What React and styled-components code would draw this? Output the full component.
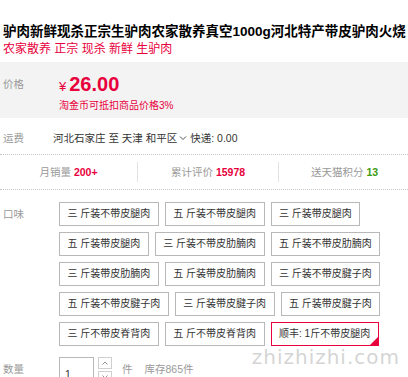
import React from "react";
import styled, { createGlobalStyle } from "styled-components";

const Global = createGlobalStyle`
  html, body { margin: 0; padding: 0; background: #fff; }
  body {
    width: 408px; height: 377px; overflow: hidden;
    font-family: "Liberation Sans", "Noto Sans CJK SC", sans-serif;
    color: #333;
  }
`;

const RED = "#e8003c";

const Page = styled.div`
  position: relative;
  width: 408px;
  height: 377px;
  overflow: hidden;
`;

const Title = styled.h1`
  margin: 0;
  padding: 23px 0 0 3px;
  font-size: 13.5px;
  line-height: 18px;
  font-weight: bold;
  color: #000;
  white-space: nowrap;
`;

const SubTitle = styled.p`
  margin: 0;
  padding-left: 3px;
  font-size: 12px;
  line-height: 16px;
  color: ${RED};
  white-space: nowrap;
`;

const PricePanel = styled.div`
  margin-top: 5px;
  background: #f3f3f3;
  padding: 11px 0 4px;
  display: grid;
  grid-template-columns: 59px 1fr;
`;

const Label = styled.div`
  padding-left: 3px;
  font-size: 10.5px;
  line-height: ${(p) => p.$lh || "16px"};
  color: #999;
`;

const PriceCol = styled.div`
  display: flex;
  flex-direction: column;
`;

const Price = styled.div`
  display: flex;
  align-items: baseline;
  color: ${RED};
  line-height: 22px;
`;

const Yen = styled.span`
  font-size: 13px;
  margin-right: 3px;
`;

const Amount = styled.span`
  font-size: 20px;
  font-weight: bold;
  font-family: "Liberation Sans", Arial, sans-serif;
`;

const Promo = styled.div`
  font-size: 10px;
  line-height: 16px;
  color: ${RED};
`;

const Row = styled.div`
  box-sizing: border-box;
  display: grid;
  grid-template-columns: ${(p) => p.$col || "53px"} 1fr;
  align-items: center;
  height: ${(p) => p.$h || "auto"};
  padding-top: 3px;
`;

const Freight = styled.div`
  font-size: 10.5px;
  color: #333;
  white-space: nowrap;
  display: flex;
  align-items: center;
`;

const Chevron = styled.svg`
  width: 8px;
  height: 6px;
  margin: 0 3px 0 2px;
`;

const Dotted = styled.div`
  border-top: 1px dotted #c8c8c8;
`;

const Stats = styled.div`
  display: grid;
  grid-template-columns: 137px 141px 1fr;
  height: 34px;
  align-items: center;
`;

const Stat = styled.div`
  text-align: center;
  font-size: 10.5px;
  color: #999;
  border-left: ${(p) => (p.$first ? "none" : "1px solid #e3e3e3")};
  line-height: 20px;
  padding-left: ${(p) => p.$pl || "0"};
`;

const Num = styled.b`
  color: ${(p) => p.$color || RED};
  font-weight: bold;
  margin-left: 3px;
`;

const SkuSection = styled.div`
  display: grid;
  grid-template-columns: 59px 336px;
  padding-top: 12px;
`;

const SkuList = styled.div`
  display: flex;
  flex-wrap: wrap;
  gap: 6px 6px;
`;

const Sku = styled.div`
  position: relative;
  box-sizing: border-box;
  height: 24px;
  padding: 0 7.5px;
  border: 1px solid ${(p) => (p.$selected ? "#e8003c" : "#b8b8b8")};
  font-size: 10px;
  line-height: 22px;
  color: #333;
  white-space: nowrap;
  background: #fff;
`;

const Corner = styled.span`
  position: absolute;
  right: -1px;
  bottom: -1px;
  width: 0;
  height: 0;
  border-style: solid;
  border-width: 0 0 10px 10px;
  border-color: transparent transparent ${RED} transparent;
`;

const QtyRow = styled.div`
  display: grid;
  grid-template-columns: 59px auto;
  margin-top: 11px;
  align-items: start;
`;

const QtyControls = styled.div`
  display: flex;
  align-items: flex-start;
`;

const QtyInput = styled.div`
  box-sizing: border-box;
  width: 35px;
  height: 30px;
  border: 1px solid #b8b8b8;
  font-size: 10.5px;
  padding: 10px 0 0 5px;
  color: #333;
`;

const Steps = styled.div`
  display: flex;
  flex-direction: column;
  gap: 2px;
  margin-left: 4px;
`;

const Step = styled.div`
  box-sizing: border-box;
  width: 14px;
  height: 12px;
  border: 1px solid #cfcfcf;
  display: flex;
  align-items: center;
  justify-content: center;
`;

const Unit = styled.span`
  font-size: 10.5px;
  color: #999;
  line-height: 24px;
  margin-left: ${(p) => p.$ml || "0"};
`;

const Watermark = styled.div`
  position: absolute;
  right: 8px;
  bottom: 8px;
  font-family: "DejaVu Sans", sans-serif;
  font-size: 20px;
  letter-spacing: 1px;
  color: rgba(205, 205, 205, 0.85);
  text-shadow: 0 0 2px #fff, 1px 1px 0 #fff;
  pointer-events: none;
`;

const skus = [
  "三 斤装不带皮腿肉",
  "五 斤装不带皮腿肉",
  "三 斤装带皮腿肉",
  "五 斤装带皮腿肉",
  "三 斤装不带皮肋腩肉",
  "五 斤装不带皮肋腩肉",
  "三 斤装带皮肋腩肉",
  "五 斤装带皮肋腩肉",
  "三 斤装不带皮腱子肉",
  "五 斤装不带皮腱子肉",
  "三 斤装带皮腱子肉",
  "五 斤装带皮腱子肉",
  "三 斤不带皮脊背肉",
  "五 斤不带皮脊背肉",
  "顺丰: 1斤不带皮腿肉",
];

export default function App() {
  return (
    <Page>
      <Global />
      <Title>驴肉新鲜现杀正宗生驴肉农家散养真空1000g河北特产带皮驴肉火烧</Title>
      <SubTitle>农家散养 正宗 现杀 新鲜 生驴肉</SubTitle>

      <PricePanel>
        <Label $lh="22px">价格</Label>
        <PriceCol>
          <Price>
            <Yen>¥</Yen>
            <Amount>26.00</Amount>
          </Price>
          <Promo>淘金币可抵扣商品价格3%</Promo>
        </PriceCol>
      </PricePanel>

      <Row $h="36px">
        <Label>运费</Label>
        <Freight>
          河北石家庄 至 天津 和平区
          <Chevron viewBox="0 0 8 6">
            <path d="M1 1.5 L4 4.5 L7 1.5" fill="none" stroke="#555" strokeWidth="1" />
          </Chevron>
          快递: 0.00
        </Freight>
      </Row>

      <Dotted />
      <Stats>
        <Stat $first>
          月销量<Num>200+</Num>
        </Stat>
        <Stat>
          累计评价<Num>15978</Num>
        </Stat>
        <Stat $pl="2px">
          送天猫积分<Num $color="#3b9b12">13</Num>
        </Stat>
      </Stats>
      <Dotted />

      <SkuSection>
        <Label $lh="24px">口味</Label>
        <SkuList>
          {skus.map((s, i) => (
            <Sku key={i} $selected={i === skus.length - 1}>
              {s}
              {i === skus.length - 1 && <Corner />}
            </Sku>
          ))}
        </SkuList>
      </SkuSection>

      <QtyRow>
        <Label $lh="24px">数量</Label>
        <QtyControls>
          <QtyInput>1</QtyInput>
          <Steps>
            <Step>
              <svg width="6" height="4" viewBox="0 0 6 4">
                <path d="M0.5 3.5 L3 1 L5.5 3.5" fill="none" stroke="#888" strokeWidth="0.9" />
              </svg>
            </Step>
            <Step>
              <svg width="6" height="4" viewBox="0 0 6 4">
                <path d="M0.5 0.5 L3 3 L5.5 0.5" fill="none" stroke="#888" strokeWidth="0.9" />
              </svg>
            </Step>
          </Steps>
          <Unit $ml="10px">件</Unit>
          <Unit $ml="12px">库存865件</Unit>
        </QtyControls>
      </QtyRow>

      <Watermark>zhizhizhi.com</Watermark>
    </Page>
  );
}
